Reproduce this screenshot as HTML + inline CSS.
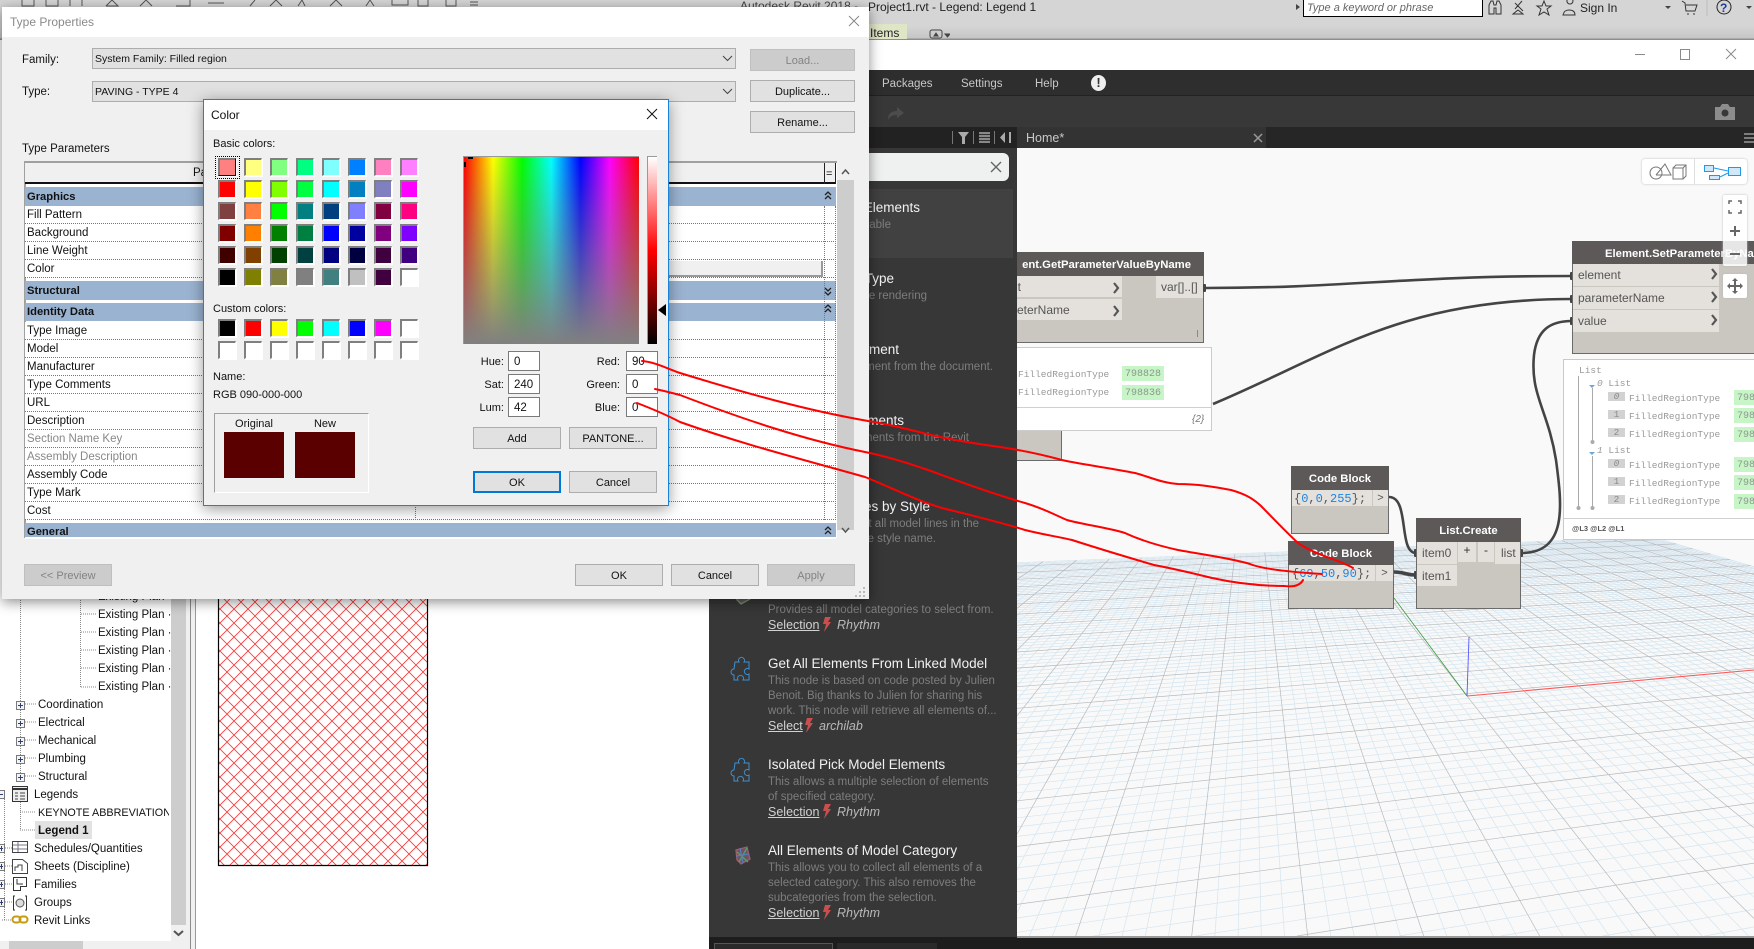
<!DOCTYPE html>
<html><head><meta charset="utf-8"><title>Type Properties</title>
<style>
html,body{margin:0;padding:0;width:1754px;height:949px;overflow:hidden;background:#fff}
body{font:11.5px/14px "Liberation Sans",sans-serif;color:#111}
#w{position:relative;width:1754px;height:949px;overflow:hidden}
.a{position:absolute}
.t{position:absolute;white-space:nowrap;line-height:14px;margin-top:1px}
.b{position:absolute;background:#e1e1e1;border:1px solid #adadad;box-sizing:border-box;text-align:center;line-height:22px;white-space:nowrap;color:#111;font-size:11px}
.d{background:#ccc;border-color:#bfbfbf;color:#838383}
.row{position:absolute;left:25px;width:811px;height:18px;border-bottom:1px dotted #777;box-sizing:border-box;background:#fff}
.row span{position:absolute;left:2px;top:2px;line-height:15px}
.band{position:absolute;left:25px;width:811px;background:#9ab3d1;font-weight:bold;box-sizing:border-box;padding-left:2px;font-size:11.2px}
.i{position:absolute;background:#fff;border:1px solid #7a7a7a;box-sizing:border-box;width:32px;height:20px;padding-left:5px;line-height:20px;font-size:11.5px}
.sw{position:absolute;width:18px;height:18px;box-sizing:border-box;border-top:2px solid #7f7f7f;border-left:2px solid #7f7f7f;border-right:1px solid #fff;border-bottom:1px solid #fff;box-shadow:1px 1px 0 #fff}
.ti{color:#f2f2f2;font-size:13.5px}
.de{color:#7d7d7d;font-size:11.5px}
.li{color:#d2d2d2;font-size:12.5px;text-decoration:underline;margin-top:0}
.rh{color:#b9b9b9;font-size:12.5px;font-style:italic;margin-top:0}
.p{position:absolute;background:#e4e1dc;color:#555;font-size:12px;line-height:23px;box-sizing:border-box;padding-left:5px;white-space:nowrap;overflow:hidden}
.n{position:absolute;background:#cac6c0;border:1px solid #6b6b6b;box-sizing:border-box}
.h{position:absolute;background:#5c5958;color:#fff;font-weight:bold;font-size:11.3px;text-align:center;white-space:nowrap;overflow:hidden;line-height:26px}
.m{font-family:"Liberation Mono",monospace;font-size:9.5px;color:#9a9a9a;position:absolute;white-space:nowrap;line-height:12px;margin-top:1px}
.g{position:absolute;background:#c8f5c8;color:#8a9a8a;font-family:"Liberation Mono",monospace;font-size:10px;line-height:17px;padding-left:3px;box-sizing:border-box;height:15px;white-space:nowrap;overflow:hidden}
.x{position:absolute;background:#d2d2d2;color:#8a8a8a;font-family:"Liberation Mono",monospace;font-size:9.5px;width:17px;height:9px;line-height:9px;text-align:center}
.c{color:#555}.k{color:#1e82e0}
</style></head><body><div id="w">

<!-- Revit background -->
<div class="a" style="left:0;top:0;width:1754px;height:40px;background:linear-gradient(#d5d5d5 0,#d5d5d5 26px,#c6c6c6 38px,#8f8f8f 39px)"></div>
<svg class="a" style="left:0;top:0" width="600" height="8" fill="none" stroke="#555"><path d="M22 0v6h12v-6M46 0v6h12v-6M70 0v6M82 0v6M106 6l6-6 6 6h-12M140 6l6-6 6 6M176 6h14v-6M208 3h16M250 6l5-6M270 6l6-6 6 6M298 6l4-6 3 6M330 6l6-6 6 6M366 6l4-6 4 6M392 0v5h16v-5M418 0v6h10v-6M446 0v6h10v-6M470 2h8M470 5h8"/></svg>
<div class="t" style="left:740px;top:-2px;color:#444;font-size:12px">Autodesk Revit 2018 -</div>
<div class="t" style="left:868px;top:-1px;color:#222;font-size:12px">Project1.rvt - Legend: Legend 1</div>
<div class="a" style="left:1303px;top:-2px;width:180px;height:19px;background:#fff;border:1px solid #000;box-sizing:border-box"></div>
<div class="t" style="left:1307px;top:0;font-style:italic;color:#666;font-size:11px">Type a keyword or phrase</div>
<svg class="a" style="left:1294px;top:0" width="8" height="14"><path d="M2 4l4 3-4 3z" fill="#444"/></svg>
<svg class="a" style="left:1486px;top:0" width="90" height="18" fill="none" stroke="#333"><path d="M3 14V5l2-4h2l1 4h2l1-4h2l2 4v9h-5V8h-2v6zM29 3l8 8M36 1l-7 8M27 14h10l-5-4zM58 1l2 5h5l-4 3 2 6-5-3-5 3 2-6-4-3h5zM84 4a3 3 0 1 0-.1 0M77 15c1-4 3-5 6-5s6 1 6 5z"/></svg>
<div class="t" style="left:1580px;top:0;color:#222;font-size:12px">Sign In</div>
<svg class="a" style="left:1660px;top:0" width="94" height="18"><path d="M5 6l3 3 3-3M92 6l-3 3-3-3z" fill="#444"/><path d="M22 1l3 2 1 8h9l2-6H26M27 14h2M33 14h2" fill="none" stroke="#333"/><circle cx="64" cy="7" r="7" fill="none" stroke="#222"/><text x="60" y="12" font-size="12" font-weight="bold" fill="#1c3c9c" font-family="Liberation Sans">?</text><path d="M47 0v16" stroke="#bbb"/></svg>
<div class="a" style="left:868px;top:24px;width:39px;height:15px;background:#dfe6c6"></div>
<div class="t" style="left:870px;top:25px;font-size:12px;color:#222">Items</div>
<svg class="a" style="left:928px;top:28px" width="22" height="12" fill="none" stroke="#444"><rect x="2" y="2" width="12" height="8" rx="2"/><path d="M6 8l2-3 2 3zM17 6h5l-2.500 3z" fill="#444"/></svg>

<!-- project browser -->
<div class="a" style="left:0;top:599px;width:171px;height:342px;background:#fff"></div>
<div class="a" style="left:171px;top:599px;width:15px;height:326px;background:#cdcdcd"></div>
<div class="a" style="left:186px;top:40px;width:10px;height:909px;background:#f0f0f0"></div>
<div class="a" style="left:190px;top:40px;width:1px;height:909px;background:#8c8c8c"></div>
<div class="a" style="left:195px;top:40px;width:1px;height:909px;background:#9a9a9a"></div>
<div class="a" style="left:171px;top:925px;width:15px;height:24px;background:#f0f0f0"></div>
<svg class="a" style="left:171px;top:928px" width="15" height="12" fill="none" stroke="#555" stroke-width="2"><path d="M3 3l4.500 4 4.500-4"/></svg>
<div class="a" style="left:0;top:941px;width:171px;height:8px;background:#f0f0f0"></div>
<div class="a" style="left:9px;top:941px;width:74px;height:8px;background:#cdcdcd"></div>
<svg class="a" style="left:0;top:600px" width="100" height="340" fill="none" stroke="#888" stroke-dasharray="1 1">
<path d="M20.500 0V176M80.500 0V87M81 14h15M81 32h15M81 50h15M81 68h15M81 87h15M25 104h11M25 122h11M25 140h11M25 158h11M25 176h11M20 212h15M20 230h15M5 248h7M5 266h7M5 284h7M5 302h7M2 320h9M20.500 200V230M4.500 195V320"/></svg>
<div class="t" style="left:98px;top:589px">Existing Plan ·</div>
<div class="t" style="left:98px;top:607px">Existing Plan ·</div>
<div class="t" style="left:98px;top:625px">Existing Plan ·</div>
<div class="t" style="left:98px;top:643px">Existing Plan ·</div>
<div class="t" style="left:98px;top:661px">Existing Plan ·</div>
<div class="t" style="left:98px;top:679px">Existing Plan ·</div>
<div class="t" style="left:38px;top:697px">Coordination</div>
<div class="t" style="left:38px;top:715px">Electrical</div>
<div class="t" style="left:38px;top:733px">Mechanical</div>
<div class="t" style="left:38px;top:751px">Plumbing</div>
<div class="t" style="left:38px;top:769px">Structural</div>
<div class="t" style="left:34px;top:787px">Legends</div>
<div class="a" style="left:38px;top:806px;width:131px;height:14px;overflow:hidden;white-space:nowrap;font-size:10.8px">KEYNOTE ABBREVIATIONS</div>
<div class="a" style="left:35px;top:821px;width:57px;height:18px;background:#e2e2e2"></div>
<div class="t" style="left:38px;top:823px;font-weight:bold">Legend 1</div>
<div class="t" style="left:34px;top:841px">Schedules/Quantities</div>
<div class="t" style="left:34px;top:859px">Sheets (Discipline)</div>
<div class="t" style="left:34px;top:877px">Families</div>
<div class="t" style="left:34px;top:895px">Groups</div>
<div class="t" style="left:34px;top:913px">Revit Links</div>
<svg class="a" style="left:0;top:695px" width="34" height="235" fill="#f4f4f4" stroke="#7a7a7a">
<g stroke="#7a7a7a"><rect x="16.500" y="6.500" width="8" height="8"/><rect x="16.500" y="24.500" width="8" height="8"/><rect x="16.500" y="42.500" width="8" height="8"/><rect x="16.500" y="60.500" width="8" height="8"/><rect x="16.500" y="78.500" width="8" height="8"/><rect x="-3.500" y="95.500" width="8" height="8"/><rect x="-3.500" y="149.500" width="8" height="8"/><rect x="-3.500" y="167.500" width="8" height="8"/><rect x="-3.500" y="185.500" width="8" height="8"/><rect x="-3.500" y="203.500" width="8" height="8"/></g>
<path d="M18 10.500h5M20.500 8v5M18 28.500h5M20.500 26v5M18 46.500h5M20.500 44v5M18 64.500h5M20.500 62v5M18 82.500h5M20.500 80v5M0 99.500h3M0 153.500h3M1.500 151v5M0 171.500h3M1.500 169v5M0 189.500h3M1.500 187v5M0 207.500h3M1.500 205v5" stroke="#2a3f7a"/>
<rect x="12.500" y="91.500" width="15" height="15" fill="#eee" stroke="#333"/><path d="M13 94h14" stroke="#333" stroke-width="2"/><path d="M15 98h3M20 98h5M15 101h3M20 101h5M15 104h3M20 104h5" stroke="#444"/>
<rect x="12.500" y="146.500" width="15" height="11" fill="#fff" stroke="#444"/><path d="M13 150h14M13 154h14M18 147v10" stroke="#778"/>
<path d="M12.500 164.500h10l5 4v10h-15zM15 176v-4h3v-2h4v6" fill="#fff" stroke="#444"/>
<path d="M13.500 182.500h13v9h-6v4h-7zM17 184v5h6" fill="#fff" stroke="#333"/>
<path d="M15 201h-1.500v14H15M25 201h1.500v14H25" fill="none" stroke="#333"/><circle cx="20" cy="208" r="4" fill="#ddd" stroke="#555"/>
<rect x="12.500" y="221.500" width="8" height="6" rx="3" fill="none" stroke="#c79a12" stroke-width="2"/><rect x="19.500" y="221.500" width="8" height="6" rx="3" fill="none" stroke="#c79a12" stroke-width="2"/>
</svg>
<!-- hatch -->
<svg class="a" style="left:0;top:0" width="709" height="949">
<defs><pattern id="hx" width="14" height="14" patternUnits="userSpaceOnUse" patternTransform="translate(227 770)"><path d="M-1 -1L15 15M15 -1L-1 15" stroke="#f33" stroke-width="0.800"/></pattern></defs>
<rect x="219" y="590" width="208" height="275" fill="url(#hx)"/>
<path d="M218.500 590V865.500H427.500V590" fill="none" stroke="#000" stroke-width="1.200"/></svg>

<!-- Dynamo window -->
<div class="a" style="left:709px;top:40px;width:1045px;height:30px;background:#fff"></div>
<div class="a" style="left:709px;top:39px;width:1045px;height:1px;background:#8d8d8d"></div>
<svg class="a" style="left:1630px;top:44px" width="120" height="20" fill="none" stroke="#8a8a8a"><path d="M5 10.500h10"/><rect x="50.500" y="5.500" width="9" height="10"/><path d="M96 5l10 10M106 5l-10 10"/></svg>
<div class="a" style="left:709px;top:70px;width:1045px;height:25px;background:#2e2e2e"></div>
<div class="a" style="left:709px;top:95px;width:1045px;height:1px;background:#222"></div>
<div class="a" style="left:709px;top:96px;width:1045px;height:31px;background:#383838"></div>
<div class="t" style="left:882px;top:76px;color:#c8c8c8;font-size:11.5px">Packages</div>
<div class="t" style="left:961px;top:76px;color:#c8c8c8;font-size:11.5px">Settings</div>
<div class="t" style="left:1035px;top:76px;color:#c8c8c8;font-size:11.5px">Help</div>
<div class="a" style="left:1091px;top:75px;width:15px;height:16px;border-radius:50%;background:#eee;color:#333;text-align:center;font-weight:bold;font-size:13px;line-height:16px">!</div>
<svg class="a" style="left:885px;top:103px" width="22" height="18"><path d="M3 17c0-7 4-9 9-9V4l7 6-7 5v-3c-4 0-7 1-9 5z" fill="#4c4c4c"/></svg>
<svg class="a" style="left:1714px;top:103px" width="22" height="18"><path d="M1 4h5l2-3h6l2 3h5v13H1z" fill="#8c8c8c"/><circle cx="11" cy="10" r="3.500" fill="#383838"/></svg>
<!-- tabs -->
<div class="a" style="left:709px;top:127px;width:308px;height:810px;background:#373737"></div>
<div class="a" style="left:709px;top:127px;width:308px;height:21px;background:#222"></div>
<div class="a" style="left:1017px;top:127px;width:249px;height:21px;background:#333"></div>
<div class="a" style="left:1266px;top:127px;width:488px;height:21px;background:#262626"></div>
<div class="t" style="left:1026px;top:130px;color:#c9c9c9;font-size:12.5px">Home*</div>
<svg class="a" style="left:1252px;top:132px" width="12" height="12" stroke="#999" stroke-width="1.500"><path d="M2 2l8 8M10 2l-8 8"/></svg>
<svg class="a" style="left:1744px;top:132px" width="10" height="12" stroke="#999" stroke-width="1.500"><path d="M0 2h10M0 6h10M0 10h10"/></svg>
<svg class="a" style="left:948px;top:128px" width="68" height="18"><path d="M4.500 3v13M25.500 3v13M46.500 3v13" stroke="#777"/><path d="M10 4h11l-4 5v7h-3V9z" fill="#aaa"/><path d="M31 4h11v11H31z" fill="#888"/><path d="M31 6.500h11M31 9.500h11M31 12.500h11" stroke="#333"/><path d="M57 4v11l-5-5.500zM61 4v11h2V4z" fill="#aaa"/></svg>
<div class="a" style="left:710px;top:153px;width:299px;height:28px;background:#eff1f1;border-radius:6px"></div>
<svg class="a" style="left:990px;top:161px" width="12" height="12" stroke="#666" stroke-width="1.400"><path d="M1 1l10 10M11 1L1 11"/></svg>
<div class="a" style="left:710px;top:189px;width:303px;height:69px;background:#414141"></div>

<!-- library items -->
<div class="t ti" style="right:834px;top:200px">Select Elements</div><div class="t de" style="right:863px;top:217px">Available</div>
<div class="t ti" style="right:860px;top:271px">Element Type</div><div class="t de" style="right:827px;top:288px">e rendering</div>
<div class="t ti" style="right:855px;top:342px">Element</div><div class="t de" style="right:761px;top:359px">ment from the document.</div>
<div class="t ti" style="right:850px;top:413px">All Elements</div><div class="t de" style="right:785px;top:430px">ments from the Revit</div>
<div class="t ti" style="right:824px;top:499px">All Lines by Style</div><div class="t de" style="right:775px;top:516px">t all model lines in the</div><div class="t de" style="right:818px;top:531px">e style name.</div>
<div class="t de" style="left:768px;top:602px">Provides all model categories to select from.</div>
<div class="t li" style="left:768px;top:618px">Selection</div><div class="t rh" style="left:837px;top:618px">Rhythm</div>
<div class="t ti" style="left:768px;top:656px">Get All Elements From Linked Model</div>
<div class="t de" style="left:768px;top:673px">This node is based on code posted by Julien</div>
<div class="t de" style="left:768px;top:688px">Benoit. Big thanks to Julien for sharing his</div>
<div class="t de" style="left:768px;top:703px">work. This node will retrieve all elements of...</div>
<div class="t li" style="left:768px;top:719px">Select</div><div class="t rh" style="left:819px;top:719px">archilab</div>
<div class="t ti" style="left:768px;top:757px">Isolated Pick Model Elements</div>
<div class="t de" style="left:768px;top:774px">This allows a multiple selection of elements</div>
<div class="t de" style="left:768px;top:789px">of specified category.</div>
<div class="t li" style="left:768px;top:805px">Selection</div><div class="t rh" style="left:837px;top:805px">Rhythm</div>
<div class="t ti" style="left:768px;top:843px">All Elements of Model Category</div>
<div class="t de" style="left:768px;top:860px">This allows you to collect all elements of a</div>
<div class="t de" style="left:768px;top:875px">selected category. This also removes the</div>
<div class="t de" style="left:768px;top:890px">subcategories from the selection.</div>
<div class="t li" style="left:768px;top:906px">Selection</div><div class="t rh" style="left:837px;top:906px">Rhythm</div>
<svg class="a" style="left:725px;top:590px" width="120" height="340">
<g fill="#c94f4f"><path d="M103 28h-6l-2 7h3l-2 8 7-10h-3l3-5z" transform="translate(3 -1)"/><path d="M85 120h-6l-2 7h3l-2 8 7-10h-3l3-5z" transform="translate(3 8)"/><path d="M103 28h-6l-2 7h3l-2 8 7-10h-3l3-5z" transform="translate(3 186)"/><path d="M103 28h-6l-2 7h3l-2 8 7-10h-3l3-5z" transform="translate(3 287)"/></g>
<g fill="none" stroke="#3f8fd0" stroke-width="1"><path d="M6 74h4a3 3 0 1 1 5 0h5v7a3 3 0 1 0 0 5v6h-6a3 3 0 1 0-5 0h-4v-5a3 3 0 1 1 0-6z" transform="translate(4 -2)"/><path d="M6 175h4a3 3 0 1 1 5 0h5v7a3 3 0 1 0 0 5v6h-6a3 3 0 1 0-5 0h-4v-5a3 3 0 1 1 0-6z" transform="translate(4 -2)"/></g>
<g fill="#6b5560" stroke-width="1.300"><path d="M11 260l11-3 3 12-9 5-4-4z" stroke="#a35b6a"/><path d="M12 262l11 10M22 258l-8 14" stroke="#56a06a" fill="none"/><path d="M11 266l13-2M15 258l3 15" stroke="#5a7ac0" fill="none"/><path d="M11 2l11-3 3 10-9 5-4-4z" stroke="#6f9a6a"/></g>
</svg>
<div class="a" style="left:709px;top:937px;width:1045px;height:12px;background:#1d1d1d"></div>
<div class="a" style="left:714px;top:943px;width:119px;height:6px;border:1px solid #555;border-bottom:0;box-sizing:border-box;background:#2a2a2a"></div>
<div class="a" style="left:837px;top:943px;width:100px;height:6px;background:#2a2a2a"></div>

<!-- canvas -->
<div class="a" style="left:1017px;top:148px;width:737px;height:788px;background:#f9f9f9"></div>
<div class="a" style="left:1017px;top:936px;width:737px;height:2px;background:#9a9a9a"></div>
<svg id="grid" class="a" style="left:1017px;top:148px" width="737" height="788" viewBox="1017 148 737 788"></svg>
<!-- axes under nodes -->
<svg class="a" style="left:1017px;top:148px" width="737" height="788" viewBox="1017 148 737 788" fill="none">
<path d="M1394 598L1467 696" stroke="#3a9a3a" stroke-width=".8"/>
<path d="M1467 696L1754 670" stroke="#f55" stroke-width="1.100"/>
<path d="M1467 696L1469 637" stroke="#55f" stroke-width=".9"/>
</svg>

<!-- GetParam node -->
<div class="n" style="left:1017px;top:252px;width:187px;height:91px;border-left:0"></div>
<div class="h" style="left:1017px;top:252px;width:187px;height:24px;text-align:right;padding-right:13px;box-sizing:border-box">ent.GetParameterValueByName</div>
<div class="p" style="left:1017px;top:276px;width:105px;height:21px;padding-left:0"><span style="margin-left:-6px">nt</span></div>
<div class="p" style="left:1017px;top:299px;width:105px;height:21px;padding-left:0">eterName</div>
<div class="p" style="left:1156px;top:276px;width:47px;height:22px;font-size:12px">var[]..[]</div>
<div class="a" style="left:1197px;top:330px;width:1px;height:7px;background:#888"></div>
<svg class="a" style="left:1110px;top:280px" width="12" height="46" fill="none" stroke="#555" stroke-width="2.200"><path d="M4 3l4 5-4 5M4 26l4 5-4 5"/></svg>
<!-- GetParam preview -->
<div class="a" style="left:1017px;top:347px;width:195px;height:84px;background:#fff;border:1px solid #ccc;border-left:0;box-sizing:border-box"></div>
<div class="a" style="left:1017px;top:407px;width:195px;height:1px;background:#d0d0d0"></div>
<div class="m" style="left:1018px;top:368px">FilledRegionType</div>
<div class="m" style="left:1018px;top:386px">FilledRegionType</div>
<div class="g" style="left:1122px;top:366px;width:42px">798828</div>
<div class="g" style="left:1122px;top:385px;width:42px">798836</div>
<div class="t" style="left:1192px;top:412px;font-style:italic;font-size:10px;color:#777">{2}</div>
<div class="n" style="left:1017px;top:431px;width:45px;height:30px;border-top:0;border-left:0"></div>

<!-- wires -->
<svg class="a" style="left:0;top:0" width="1754" height="949" fill="none" stroke="#444" stroke-width="2.600">
<path d="M1205 288C1350 288 1400 276 1572 276"/>
<path d="M1213 404C1330 355 1400 299 1572 299"/>
<path d="M1521 553C1568 553 1562 505 1556 460C1548 410 1530 395 1534 355C1537 330 1550 321 1572 321"/>
<path d="M1389 497C1410 497 1398 553 1416 553"/>
<path d="M1394 572C1405 572 1405 575 1416 575" stroke-width="3.500"/>
<g fill="#444" stroke="none"><rect x="1203" y="284" width="3" height="8" rx="1"/><rect x="1570" y="272" width="3" height="8" rx="1"/><rect x="1570" y="295" width="3" height="8" rx="1"/><rect x="1570" y="317" width="3" height="8" rx="1"/><rect x="1414" y="549" width="3" height="8" rx="1"/><rect x="1414" y="571" width="3" height="8" rx="1"/><rect x="1520" y="549" width="3" height="8" rx="1"/></g>
</svg>

<!-- Code block 1 -->
<div class="n" style="left:1291px;top:466px;width:98px;height:68px"></div>
<div class="h" style="left:1291px;top:466px;width:98px;height:24px">Code Block</div>
<div class="a" style="left:1292px;top:490px;width:80px;height:16px;background:#e4e1dc"></div>
<div class="a" style="left:1373px;top:490px;width:15px;height:16px;background:#e4e1dc;color:#555;text-align:center;font-size:11px;line-height:16px">&gt;</div>
<div class="t" style="left:1294px;top:491px;font:12px/14px 'Liberation Mono',monospace;color:#555">{<span class="k">0</span>,<span class="k">0</span>,<span class="k">255</span>};</div>
<!-- Code block 2 -->
<div class="n" style="left:1288px;top:541px;width:106px;height:68px"></div>
<div class="h" style="left:1288px;top:541px;width:106px;height:24px">Code Block</div>
<div class="a" style="left:1289px;top:565px;width:86px;height:16px;background:#e4e1dc"></div>
<div class="a" style="left:1376px;top:565px;width:17px;height:16px;background:#e4e1dc;color:#555;text-align:center;font-size:11px;line-height:16px">&gt;</div>
<div class="t" style="left:1292px;top:566px;font:12px/14px 'Liberation Mono',monospace;color:#555">{<span class="k">69</span>,<span class="k">50</span>,<span class="k">90</span>};</div>
<!-- List.Create -->
<div class="n" style="left:1416px;top:518px;width:105px;height:91px"></div>
<div class="h" style="left:1416px;top:518px;width:105px;height:24px">List.Create</div>
<div class="p" style="left:1417px;top:542px;width:40px;height:22px">item0</div>
<div class="p" style="left:1417px;top:565px;width:40px;height:21px">item1</div>
<div class="p" style="left:1458px;top:542px;width:18px;height:20px;padding:0;text-align:center;line-height:17px;color:#333">+</div>
<div class="p" style="left:1478px;top:542px;width:16px;height:20px;padding:0;text-align:center;line-height:17px;color:#333">-</div>
<div class="p" style="left:1495px;top:542px;width:25px;height:22px;padding-left:6px">list</div>
<!-- SetParam -->
<div class="n" style="left:1572px;top:241px;width:182px;height:113px;border-right:0"></div>
<div class="h" style="left:1572px;top:241px;width:182px;height:23px;text-align:left;padding-left:33px;box-sizing:border-box">Element.SetParameterByNa</div>
<div class="p" style="left:1573px;top:264px;width:146px;height:22px">element</div>
<div class="p" style="left:1573px;top:287px;width:146px;height:22px">parameterName</div>
<div class="p" style="left:1573px;top:310px;width:146px;height:22px">value</div>
<svg class="a" style="left:1708px;top:266px" width="12" height="66" fill="none" stroke="#555" stroke-width="2.200"><path d="M4 3l4 5-4 5M4 26l4 5-4 5M4 49l4 5-4 5"/></svg>
<!-- Preview list -->
<div class="a" style="left:1563px;top:359px;width:191px;height:181px;background:#fff;border:1px solid #c9c9c9;border-right:0;box-sizing:border-box"></div>
<div class="a" style="left:1564px;top:518px;width:190px;height:1px;background:#d0d0d0"></div>
<div class="m" style="left:1579px;top:364px">List</div>
<div class="m" style="left:1597px;top:377px"><i>0</i> List</div>
<div class="m" style="left:1597px;top:444px"><i>1</i> List</div>
<div class="x" style="left:1608px;top:392px"><i>0</i></div><div class="m" style="left:1629px;top:392px">FilledRegionType</div><div class="g" style="left:1734px;top:390px;width:20px">798</div>
<div class="x" style="left:1608px;top:410px">1</div><div class="m" style="left:1629px;top:410px">FilledRegionType</div><div class="g" style="left:1734px;top:408px;width:20px">798</div>
<div class="x" style="left:1608px;top:428px">2</div><div class="m" style="left:1629px;top:428px">FilledRegionType</div><div class="g" style="left:1734px;top:427px;width:20px">798</div>
<div class="x" style="left:1608px;top:459px"><i>0</i></div><div class="m" style="left:1629px;top:459px">FilledRegionType</div><div class="g" style="left:1734px;top:457px;width:20px">798</div>
<div class="x" style="left:1608px;top:477px">1</div><div class="m" style="left:1629px;top:477px">FilledRegionType</div><div class="g" style="left:1734px;top:475px;width:20px">798</div>
<div class="x" style="left:1608px;top:495px">2</div><div class="m" style="left:1629px;top:495px">FilledRegionType</div><div class="g" style="left:1734px;top:494px;width:20px">798</div>
<svg class="a" style="left:1570px;top:370px" width="40" height="145" fill="#aaa" stroke="none"><rect x="8" y="6" width="1" height="130"/><rect x="22" y="18" width="1" height="52"/><rect x="22" y="86" width="1" height="50"/><circle cx="8.500" cy="138" r="2"/><circle cx="22.500" cy="138" r="2"/><circle cx="22.500" cy="72" r="2"/><path d="M19 15h6l-3 3zM19 82h6l-3 3z" fill="#6fa5d8"/></svg>
<div class="t" style="left:1572px;top:521px;font-size:7.500px;color:#555;font-weight:bold">@L3 @L2 @L1</div>
<!-- view toggles -->
<div class="a" style="left:1642px;top:159px;width:105px;height:25px;background:#fff;border-radius:3px;box-shadow:0 0 2px #bbb"></div>
<div class="a" style="left:1694px;top:159px;width:1px;height:25px;background:#ddd"></div>
<svg class="a" style="left:1642px;top:159px" width="105" height="25" fill="none"><g stroke="#777"><circle cx="14" cy="14" r="6"/><path d="M14 16L23 5l6 11H14M31 9h10v11H31zM31 9l3-3h10v11l-3 3M41 9l3-3"/></g><g stroke="#1e9ae8"><rect x="62.500" y="6.500" width="9" height="6" fill="#cfe8fa"/><rect x="86.500" y="8.500" width="12" height="8" fill="#cfe8fa"/><rect x="67.500" y="16.500" width="10" height="4" fill="#cfe8fa"/><path d="M72 9l14 3M78 18l8-4"/></g></svg>
<div class="a" style="left:1723px;top:195px;width:24px;height:71px;background:rgba(255,255,255,.85);box-shadow:0 0 2px #bbb;border-radius:2px"></div>
<svg class="a" style="left:1723px;top:195px" width="24" height="71" fill="none" stroke="#666" stroke-width="1.500"><path d="M6 9V6h3M15 6h3v3M6 15v3h3M18 15v3h-3"/><path d="M7 36h10M12 31v10" stroke-width="2"/><path d="M7 59h10" stroke-width="2"/></svg>
<div class="a" style="left:1723px;top:274px;width:24px;height:24px;background:#fff;box-shadow:0 0 2px #bbb;border-radius:2px"></div>
<svg class="a" style="left:1723px;top:274px" width="24" height="24"><path d="M12 4l3 3h-2v4h4V9l3 3-3 3v-2h-4v4h2l-3 3-3-3h2v-4H7v2l-3-3 3-3v2h4V7H9z" fill="#666"/></svg>

<!-- Type Properties dialog -->
<div class="a" style="left:2px;top:7px;width:867px;height:592px;background:#f0f0f0;box-shadow:0 3px 12px rgba(0,0,0,.45)"></div>
<div class="a" style="left:2px;top:7px;width:867px;height:30px;background:#fff"></div>
<div class="t" style="left:10px;top:14px;color:#8a8a8a;font-size:12px">Type Properties</div>
<svg class="a" style="left:848px;top:15px" width="12" height="12" stroke="#888"><path d="M1 1l10 10M11 1L1 11"/></svg>
<div class="t" style="left:22px;top:52px">Family:</div>
<div class="t" style="left:22px;top:84px">Type:</div>
<div class="a" style="left:92px;top:48px;width:644px;height:21px;background:#e1e1e1;border:1px solid #adadad;box-sizing:border-box;padding-left:2px;line-height:21px;font-size:10.5px">System Family: Filled region</div>
<div class="a" style="left:92px;top:81px;width:644px;height:21px;background:#e1e1e1;border:1px solid #adadad;box-sizing:border-box;padding-left:2px;line-height:21px;font-size:10.5px">PAVING - TYPE 4</div>
<svg class="a" style="left:722px;top:54px" width="12" height="44" fill="none" stroke="#444"><path d="M1 2l4.500 4.500L10 2M1 35l4.500 4.500L10 35"/></svg>
<div class="b d" style="left:750px;top:49px;width:105px;height:22px">Load...</div>
<div class="b" style="left:750px;top:80px;width:105px;height:22px">Duplicate...</div>
<div class="b" style="left:750px;top:111px;width:105px;height:22px">Rename...</div>
<div class="t" style="left:22px;top:141px">Type Parameters</div>
<!-- table -->
<div class="a" style="left:24px;top:161px;width:813px;height:377px;background:#fff;border-top:2px solid #a0a0a0;border-left:2px solid #a0a0a0;box-sizing:border-box"></div>
<div class="a" style="left:25px;top:163px;width:811px;height:21px;background:#f0f0f0;border-bottom:2px solid #111;box-sizing:border-box"></div>
<div class="t" style="left:193px;top:165px">Pa</div>
<div class="a" style="left:824px;top:163px;width:1px;height:21px;background:#222"></div>
<div class="a" style="left:835px;top:163px;width:1px;height:21px;background:#222"></div>
<div class="t" style="left:826px;top:166px;font-size:11px">=</div>
<div class="a" style="left:837px;top:163px;width:17px;height:375px;background:#f0f0f0"></div>
<div class="a" style="left:837px;top:180px;width:17px;height:350px;background:#cdcdcd"></div>
<svg class="a" style="left:840px;top:168px" width="12" height="8" fill="none" stroke="#555" stroke-width="1.500"><path d="M2 6l3.500-4L9 6"/></svg>
<svg class="a" style="left:840px;top:526px" width="12" height="8" fill="none" stroke="#555" stroke-width="1.500"><path d="M2 2l3.500 4L9 2"/></svg>
<div class="band" style="top:187px;height:19px;line-height:21px">Graphics</div>
<div class="row" style="top:206px"><span>Fill Pattern</span></div>
<div class="row" style="top:224px"><span>Background</span></div>
<div class="row" style="top:242px"><span>Line Weight</span></div>
<div class="row" style="top:260px;height:18px"><span>Color</span></div>
<div class="a" style="left:600px;top:261px;width:223px;height:16px;background:#f0f0f0;border-right:2px solid #999;border-bottom:2px solid #999;box-sizing:border-box"></div>
<div class="band" style="top:281px;height:19px;line-height:20px">Structural</div>
<div class="band" style="top:303px;height:18px;line-height:19px">Identity Data</div>
<div class="row" style="top:322px"><span>Type Image</span></div>
<div class="row" style="top:340px"><span>Model</span></div>
<div class="row" style="top:358px"><span>Manufacturer</span></div>
<div class="row" style="top:376px"><span>Type Comments</span></div>
<div class="row" style="top:394px"><span>URL</span></div>
<div class="row" style="top:412px"><span>Description</span></div>
<div class="row" style="top:430px"><span style="color:#888">Section Name Key</span></div>
<div class="row" style="top:448px"><span style="color:#888">Assembly Description</span></div>
<div class="row" style="top:466px"><span>Assembly Code</span></div>
<div class="row" style="top:484px"><span>Type Mark</span></div>
<div class="row" style="top:502px;height:18px"><span>Cost</span></div>
<div class="a" style="left:25px;top:523px;width:811px;height:14px;background:#9ab3d1;font-weight:bold;padding-left:2px;box-sizing:border-box;overflow:hidden;line-height:18px;font-size:11.2px">General</div>
<div class="a" style="left:25px;top:537px;width:811px;height:2px;background:#fff"></div>
<div class="a" style="left:415px;top:206px;height:314px;border-left:1px dotted #777"></div>
<div class="a" style="left:824px;top:206px;height:314px;border-left:1px dotted #777"></div>
<div class="a" style="left:835px;top:206px;height:314px;border-left:1px dotted #777"></div>
<svg class="a" style="left:822px;top:190px" width="12" height="345" fill="none" stroke="#222" stroke-width="1.300"><path d="M3 5l3-3 3 3M3 9l3-3 3 3M3 98l3 3 3-3M3 102l3 3 3-3M3 118l3-3 3 3M3 122l3-3 3 3M3 340l3-3 3 3M3 344l3-3 3 3"/></svg>
<div class="b d" style="left:24px;top:564px;width:88px;height:22px">&lt;&lt; Preview</div>
<div class="b" style="left:575px;top:564px;width:88px;height:22px">OK</div>
<div class="b" style="left:671px;top:564px;width:88px;height:22px">Cancel</div>
<div class="b d" style="left:767px;top:564px;width:88px;height:22px">Apply</div>
<svg class="a" style="left:855px;top:587px" width="12" height="10" fill="#bbb"><rect x="8" y="0" width="2" height="2"/><rect x="4" y="4" width="2" height="2"/><rect x="8" y="4" width="2" height="2"/><rect x="0" y="8" width="2" height="2"/><rect x="4" y="8" width="2" height="2"/><rect x="8" y="8" width="2" height="2"/></svg>

<!-- Color dialog -->
<div class="a" style="left:203px;top:99px;width:466px;height:407px;background:#f0f0f0;border:1px solid #1883d7;box-sizing:border-box;box-shadow:0 3px 14px rgba(0,0,0,.4)"></div>
<div class="a" style="left:204px;top:100px;width:464px;height:30px;background:#fff"></div>
<div class="t" style="left:211px;top:107px;font-size:12px">Color</div>
<svg class="a" style="left:646px;top:108px" width="12" height="12" stroke="#111"><path d="M1 1l10 10M11 1L1 11"/></svg>
<div class="t" style="left:213px;top:136px;font-size:11px">Basic colors:</div>
<div class="t" style="left:213px;top:301px;font-size:11px">Custom colors:</div>
<div id="sw"></div>
<div class="a" style="left:218px;top:158px;width:18px;height:18px;border:1px solid #000;border-top-color:#7f7f7f;border-left-color:#7f7f7f;box-sizing:border-box"></div>
<div class="a" style="left:215px;top:156px;width:25px;height:23px;border:1px dotted #000;box-sizing:border-box"></div>
<div class="t" style="left:213px;top:369px;font-size:11px">Name:</div>
<div class="t" style="left:213px;top:387px;font-size:11px">RGB 090-000-000</div>
<div class="a" style="left:214px;top:413px;width:155px;height:80px;border:1px solid #a0a0a0;border-right-color:#fff;border-bottom-color:#fff;box-sizing:border-box"></div>
<div class="t" style="left:224px;width:60px;text-align:center;top:416px;font-size:11px">Original</div>
<div class="t" style="left:295px;width:60px;text-align:center;top:416px;font-size:11px">New</div>
<div class="a" style="left:224px;top:432px;width:60px;height:46px;background:#5a0000"></div>
<div class="a" style="left:295px;top:432px;width:60px;height:46px;background:#5a0000"></div>
<div class="a" style="left:463px;top:156px;width:176px;height:188px;background:linear-gradient(rgba(128,128,128,0),#808080),linear-gradient(90deg,#f00,#ff0 16.6%,#0f0 33.3%,#0ff 50%,#00f 66.6%,#f0f 83.3%,#f00);border-top:1px solid #999;border-left:1px solid #999;box-sizing:border-box"></div>
<div class="a" style="left:468px;top:157px;width:5px;height:2px;background:#000"></div>
<div class="a" style="left:464px;top:162px;width:2px;height:5px;background:#000"></div>
<div class="a" style="left:647px;top:156px;width:10px;height:188px;background:linear-gradient(#fff,#f00 50%,#000);border-top:1px solid #999;border-left:1px solid #999;box-sizing:border-box"></div>
<svg class="a" style="left:658px;top:303px" width="9" height="14"><path d="M0 7L8 1v12z" fill="#000"/></svg>
<div class="t" style="left:460px;width:44px;text-align:right;top:354px;font-size:11px">Hue:</div>
<div class="t" style="left:460px;width:44px;text-align:right;top:377px;font-size:11px">Sat:</div>
<div class="t" style="left:460px;width:44px;text-align:right;top:400px;font-size:11px">Lum:</div>
<div class="t" style="left:575px;width:45px;text-align:right;top:354px;font-size:11px">Red:</div>
<div class="t" style="left:575px;width:45px;text-align:right;top:377px;font-size:11px">Green:</div>
<div class="t" style="left:575px;width:45px;text-align:right;top:400px;font-size:11px">Blue:</div>
<div class="i" style="left:508px;top:351px">0</div>
<div class="i" style="left:508px;top:374px">240</div>
<div class="i" style="left:508px;top:397px">42</div>
<div class="i" style="left:626px;top:351px">90</div>
<div class="i" style="left:626px;top:374px">0</div>
<div class="i" style="left:626px;top:397px">0</div>
<div class="b" style="left:473px;top:427px;width:88px;height:22px">Add</div>
<div class="b" style="left:569px;top:427px;width:88px;height:22px">PANTONE...</div>
<div class="b" style="left:473px;top:471px;width:88px;height:22px;border:2px solid #0078d7;line-height:20px">OK</div>
<div class="b" style="left:569px;top:471px;width:88px;height:22px">Cancel</div>

<!-- red annotation strokes -->
<svg class="a" style="left:0;top:0" width="1754" height="949" fill="none" stroke="#f00" stroke-width="2" stroke-linejoin="round" stroke-linecap="round">
<path d="M642 361C655 362 668 369 680 373C745 393 805 410 868 421C895 425 920 433 945 438C965 442 985 445 1000 447C1020 450 1040 454 1062 460C1085 465 1110 468 1135 473C1150 477 1162 483 1178 484C1198 484 1215 487 1231 490C1245 494 1252 498 1260 505C1272 517 1284 530 1298 543C1315 555 1340 560 1353 568"/>
<path d="M655 389C665 391 672 393 680 395C745 420 805 440 865 452C885 456 905 462 928 470C955 480 990 493 1025 503C1045 509 1055 515 1067 520C1085 525 1105 527 1125 533C1140 540 1160 546 1178 550C1205 555 1230 558 1250 564C1262 569 1290 572 1322 574"/>
<path d="M637 403C650 408 665 414 680 422C745 445 805 460 865 477C890 487 915 500 942 508C970 515 1000 522 1025 530C1045 535 1060 537 1072 540C1100 549 1130 558 1154 565C1175 569 1192 573 1212 578C1235 583 1260 586 1284 586C1292 587 1300 586 1303 580"/>
</svg>

<script>
(function(){
var basic=["#ff8080","#ffff80","#80ff80","#00ff80","#80ffff","#0080ff","#ff80c0","#ff80ff",
"#ff0000","#ffff00","#80ff00","#00ff40","#00ffff","#0080c0","#8080c0","#ff00ff",
"#804040","#ff8040","#00ff00","#008080","#004080","#8080ff","#800040","#ff0080",
"#800000","#ff8000","#008000","#008040","#0000ff","#0000a0","#800080","#8000ff",
"#400000","#804000","#004000","#004040","#000080","#000040","#400040","#400080",
"#000000","#808000","#808040","#808080","#408080","#c0c0c0","#400040","#ffffff"];
var cust=["#000","#f00","#ff0","#0f0","#0ff","#00f","#f0f","#fff","#fff","#fff","#fff","#fff","#fff","#fff","#fff","#fff"];
var h="";
basic.forEach(function(c,i){h+='<div class="sw" style="left:'+(218+26*(i%8))+'px;top:'+(158+22*Math.floor(i/8))+'px;background:'+c+'"></div>';});
cust.forEach(function(c,i){h+='<div class="sw" style="left:'+(218+26*(i%8))+'px;top:'+(319+22*Math.floor(i/8))+'px;background:'+c+'"></div>';});
document.getElementById("sw").innerHTML=h;
var xa=1250,ya=420,xb=4533,yb=420,xo=1467,yo=696,a=0.083,b=0.0189;
var X0=1017,X1=1754,Y0=148,Y1=936;
function H(u,v){var w1=b*u,w2=a*v,d=1+w1+w2;return [(w1*xb+w2*xa+xo)/d,(w1*yb+w2*ya+yo)/d];}
/* clip each segment to the canvas rectangle so nothing extends past the frame */
function L(p,q,c,w){
  var t0=0,t1=1,dx=q[0]-p[0],dy=q[1]-p[1];
  var P=[-dx,dx,-dy,dy],Q=[p[0]-X0,X1-p[0],p[1]-Y0,Y1-p[1]];
  for(var k=0;k<4;k++){
    if(P[k]==0){if(Q[k]<0)return "";continue;}
    var r=Q[k]/P[k];
    if(P[k]<0){if(r>t1)return "";if(r>t0)t0=r;}
    else{if(r<t0)return "";if(r<t1)t1=r;}
  }
  return '<line x1="'+(p[0]+t0*dx).toFixed(1)+'" y1="'+(p[1]+t0*dy).toFixed(1)+'" x2="'+(p[0]+t1*dx).toFixed(1)+'" y2="'+(p[1]+t1*dy).toFixed(1)+'" stroke="'+c+'" stroke-width="'+w+'"/>';
}
var umin=-16,umax=11.8,vmin=-11,vmax=13.7,minor="",major="",i;
for(i=0;i<=Math.round((umax-umin)*5);i++){var u=umin+i/5,isM=i%5==0;
  var v0=Math.max(vmin,(0.06-1-b*u)/a);
  var s=L(H(u,v0),H(u,vmax),isM?"#b6bbbf":"#d5e5ef",0.7);
  if(isM)major+=s;else minor+=s;}
for(i=0;i<=Math.round((vmax-vmin)*5);i++){var v=vmax-i/5,isN=(i-3+500)%5==0;
  var u0=Math.max(umin,(0.06-1-a*v)/b);
  var s2=L(H(u0,v),H(umax,v),isN?"#b6bbbf":"#d5e5ef",0.7);
  if(isN)major+=s2;else minor+=s2;}
document.getElementById("grid").innerHTML=minor+major;
})();
</script>
</div></body></html>
